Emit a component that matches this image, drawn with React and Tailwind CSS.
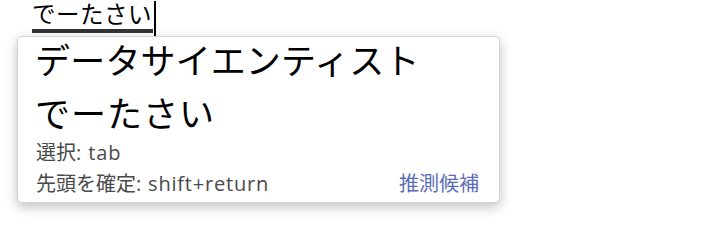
export default function App() {
  const ff = { fontFamily: '"Liberation Sans", "Noto Sans CJK JP", sans-serif' };
  const small = { fontFamily: '"Open Sans", "Noto Sans CJK JP", sans-serif' };
  return (
    <div className="w-[718px] h-[230px] bg-white relative overflow-hidden" style={ff}>
      <div className="flex items-start pl-[32px] h-[36px]">
        <span className="relative text-[23.5px] leading-[30px] text-black tracking-[0.5px]">
          でーたさい
          <span className="absolute left-0 right-[-1px] top-[29px] h-[4px] bg-[#333]" />
        </span>
        <span className="w-[2px] h-[35px] bg-black ml-[2px] mt-[1px]" />
      </div>
      <div className="ml-[17px] w-[483px] h-[167px] bg-white border border-[#d4d4d4] rounded-[5px] shadow-[0_4px_12px_rgba(0,0,0,0.25)] px-[17px] flex flex-col overflow-hidden">
        <div className="text-[35px] leading-[53px] text-black mt-[-2px] tracking-[0.2px]">データサイエンティスト</div>
        <div className="text-[35px] leading-[53px] text-black tracking-[1px]">でーたさい</div>
        <div className="text-[20px] leading-[31px] text-[#4a4a4a] mt-[-4px] pl-[1px]" style={small}>
          選択<span className="tracking-[0.9px]">: tab</span>
        </div>
        <div className="flex justify-between text-[20px] leading-[31px] text-[#4a4a4a] pl-[1px] pr-[3px]" style={small}>
          <span>
            先頭を確定<span className="tracking-[0.8px]">: shift+return</span>
          </span>
          <span className="text-[#5a6cb8]">推測候補</span>
        </div>
      </div>
    </div>
  );
}
